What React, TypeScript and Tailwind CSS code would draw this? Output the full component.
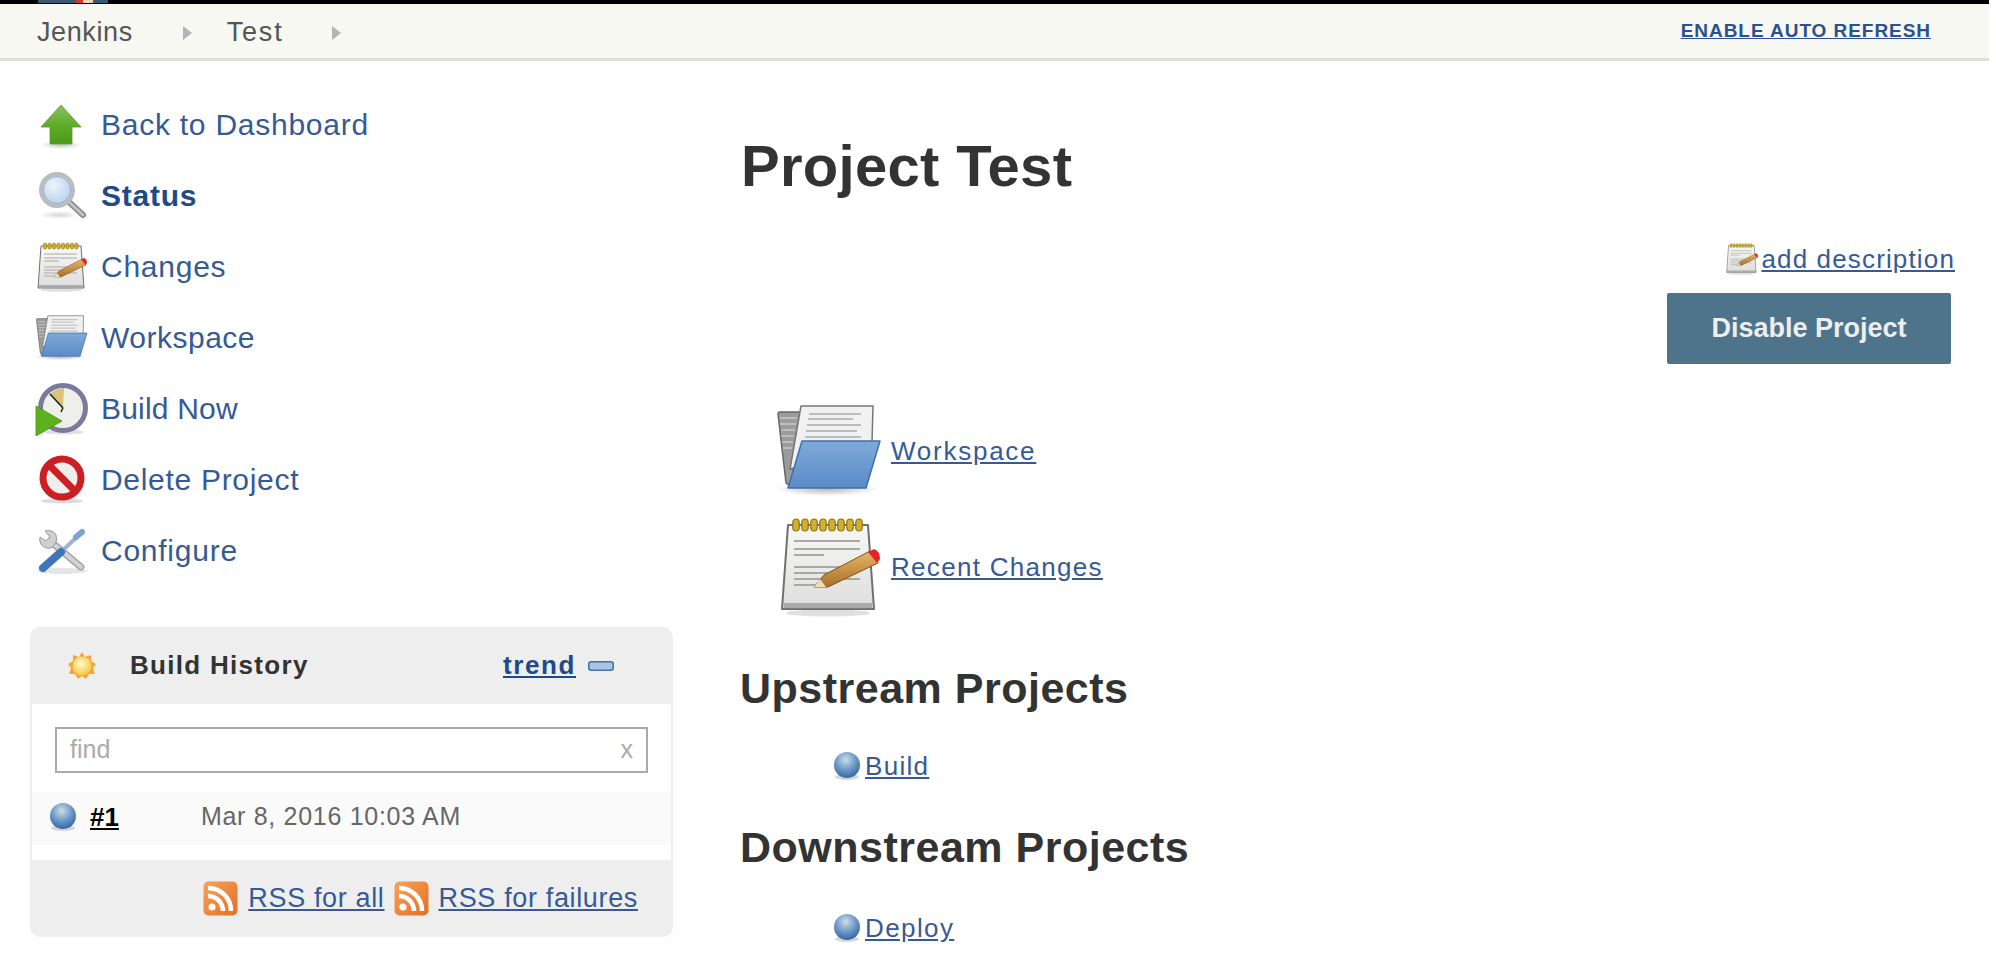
import React from "react";

function ArrowIcon() {
  return (
    <svg width="50" height="50" viewBox="0 0 50 50">
      <defs>
        <linearGradient id="arrowFill" x1="0" y1="0" x2="0" y2="1">
          <stop offset="0" stopColor="#8cc266" />
          <stop offset="0.55" stopColor="#5bab23" />
          <stop offset="1" stopColor="#4e9a18" />
        </linearGradient>
        <radialGradient id="arrowShadow">
          <stop offset="0" stopColor="#888" stopOpacity="0.5" />
          <stop offset="1" stopColor="#888" stopOpacity="0" />
        </radialGradient>
      </defs>
      <ellipse cx="24" cy="45" rx="21" ry="4" fill="url(#arrowShadow)" />
      <path d="M24 5 L44 27 L35 27 L35 44 L13 44 L13 27 L4 27 Z" fill="url(#arrowFill)" stroke="#5c9a2e" strokeWidth="0.8" />
    </svg>
  );
}

function SearchIcon() {
  return (
    <svg width="50" height="50" viewBox="0 0 50 50">
      <defs>
        <radialGradient id="lens" cx="0.4" cy="0.35" r="0.7">
          <stop offset="0" stopColor="#edf3fb" />
          <stop offset="1" stopColor="#b5cde8" />
        </radialGradient>
        <radialGradient id="searchShadow">
          <stop offset="0" stopColor="#999" stopOpacity="0.4" />
          <stop offset="1" stopColor="#999" stopOpacity="0" />
        </radialGradient>
      </defs>
      <ellipse cx="22" cy="44" rx="21" ry="4" fill="url(#searchShadow)" />
      <path d="M31 30 L46 44" stroke="#8a8a8a" strokeWidth="6" strokeLinecap="round" />
      <path d="M31 30 L46 44" stroke="#c4c4c4" strokeWidth="3" strokeLinecap="round" />
      <circle cx="20" cy="19" r="16" fill="url(#lens)" stroke="#bcbcbc" strokeWidth="4" />
      <circle cx="20" cy="19" r="13.5" fill="none" stroke="#8fb1d8" strokeWidth="1" />
    </svg>
  );
}

const ringXs = [8, 12.5, 17, 21.5, 26, 30.5, 35, 39.5];

function NotepadIcon({ size, id }: { size: number; id: string }) {
  return (
    <svg width={size} height={size} viewBox="0 0 50 50">
      <defs>
        <linearGradient id={id} x1="0" y1="0" x2="0" y2="1">
          <stop offset="0" stopColor="#f8f8f6" />
          <stop offset="1" stopColor="#dddddd" />
        </linearGradient>
        <linearGradient id={`${id}Pencil`} x1="0" y1="0" x2="0" y2="1">
          <stop offset="0" stopColor="#e8b766" />
          <stop offset="1" stopColor="#a8702a" />
        </linearGradient>
      </defs>
      <ellipse cx="24" cy="48" rx="21" ry="1.8" fill="#ccc" opacity="0.6" />
      <path d="M4 4 L44 4 L47 46 L1 46 Z" fill={`url(#${id})`} stroke="#6f6f6f" strokeWidth="1" strokeLinejoin="round" />
      <rect x="2" y="43" width="44" height="2.6" fill="#aaaaaa" />
      {ringXs.map((x) => (
        <rect key={x} x={x - 1.6} y="1" width="3.2" height="6" rx="1.6" fill="#d0b02e" stroke="#8f7415" strokeWidth="0.6" />
      ))}
      <path d="M7 12H40M7 16H40M7 19H22M7 25H38M7 28H30M7 31H40M7 34H18" stroke="#a8a8a8" strokeWidth="1" />
      <path d="M17 35 L22 29 L45 17 L49 23 L24 35 Z" fill={`url(#${id}Pencil)`} stroke="#7c5520" strokeWidth="0.5" strokeLinejoin="round" />
      <path d="M17 35 L20 31 L23 35 Z" fill="#f1dcb0" />
      <path d="M44 17.5 L47 16 Q50 17 50 21 L48.5 23 Z" fill="#e2252b" />
    </svg>
  );
}

function FolderIcon({ width, height, id }: { width: number; height: number; id: string }) {
  return (
    <svg width={width} height={height} viewBox="0 0 105 92">
      <defs>
        <linearGradient id={id} x1="0" y1="0" x2="0" y2="1">
          <stop offset="0" stopColor="#7fa9da" />
          <stop offset="1" stopColor="#5a8cc6" />
        </linearGradient>
        <radialGradient id={`${id}Shadow`}>
          <stop offset="0" stopColor="#888" stopOpacity="0.6" />
          <stop offset="1" stopColor="#888" stopOpacity="0" />
        </radialGradient>
      </defs>
      <ellipse cx="50" cy="84" rx="52" ry="7" fill={`url(#${id}Shadow)`} />
      <path d="M1 9 Q1 7 3 7 L24 7 L14 82 L9 78 Z" fill="#9c9c9c" stroke="#666" strokeWidth="1.5" strokeLinejoin="round" />
      <path d="M3 13H20M3 19H19M4 25H18M4 31H17M5 37H16M6 43H15" stroke="#c8c8c8" strokeWidth="1.5" />
      <path d="M24 1 L96 1 L95 38 L30 60 L13 64 Z" fill="#f1f1f1" stroke="#777" strokeWidth="1.5" strokeLinejoin="round" />
      <path d="M32 9H84M31 14H76M30 20H84M29 26H80M28 32H84" stroke="#aaa" strokeWidth="1.6" />
      <path d="M25 36 L103 36 L89 83 L11 83 Z" fill={`url(#${id})`} stroke="#3f70ab" strokeWidth="1.5" strokeLinejoin="round" />
    </svg>
  );
}

function ClockIcon() {
  return (
    <svg width="54" height="54" viewBox="0 0 54 54">
      <ellipse cx="29" cy="50" rx="20" ry="2.5" fill="#ccc" opacity="0.6" />
      <circle cx="28" cy="26" r="22.5" fill="#efefe9" stroke="#7a7a9c" strokeWidth="5" />
      <path d="M28 26 L15 12 A21 21 0 0 1 29 6 Z" fill="#d8c47a" />
      <path d="M28 26 L15 12 M28 26 L26 30" stroke="#222" strokeWidth="1.6" />
      <path d="M1 24 L27 39 L1 54 Z" fill="#5cb21d" stroke="#4b8f1a" strokeWidth="0.8" strokeLinejoin="round" />
    </svg>
  );
}

function StopIcon() {
  return (
    <svg width="50" height="50" viewBox="0 0 50 50">
      <ellipse cx="25" cy="46" rx="21" ry="2.5" fill="#ccc" opacity="0.7" />
      <circle cx="25" cy="23" r="19" fill="#eeeeee" stroke="#cc1f24" strokeWidth="7" />
      <path d="M12 10 L38 36" stroke="#cc1f24" strokeWidth="7" />
    </svg>
  );
}

function ToolsIcon() {
  return (
    <svg width="54" height="50" viewBox="0 0 54 50">
      <ellipse cx="27" cy="45" rx="25" ry="3" fill="#ccc" opacity="0.5" />
      <path d="M15 15 L46 41" stroke="#a6a6a6" strokeWidth="7" strokeLinecap="round" />
      <path d="M15 15 L46 41" stroke="#d4d4d4" strokeWidth="4" strokeLinecap="round" />
      <path d="M5 11 L11 15 L15 11 L10 5 Q18 3 21 9 Q23 14 20 18 L16 22 Q9 23 6 18 Q4 15 5 11 Z" fill="#cfcfcf" stroke="#9a9a9a" strokeWidth="1" strokeLinejoin="round" />
      <path d="M26 26 L44 9" stroke="#9fb4cc" strokeWidth="4" strokeLinecap="round" />
      <path d="M41 11 L47 6" stroke="#7fa3cf" strokeWidth="6" strokeLinecap="round" />
      <path d="M8 42 L26 26" stroke="#3f76b8" strokeWidth="8" strokeLinecap="round" />
    </svg>
  );
}

function SunIcon() {
  return (
    <svg width="30" height="30" viewBox="0 0 30 30">
      <defs>
        <radialGradient id="sunFill" cx="0.45" cy="0.4" r="0.6">
          <stop offset="0" stopColor="#fffbd0" />
          <stop offset="1" stopColor="#f8c73c" />
        </radialGradient>
      </defs>
      <path d="M15 1 L18 6 L24 4 L24 10 L29 13 L26 17 L28 23 L22 23 L19 28 L15 25 L11 28 L8 23 L2 23 L4 17 L1 13 L6 10 L6 4 L12 6 Z" fill="#f4a63a" />
      <circle cx="15" cy="15" r="9.5" fill="url(#sunFill)" />
    </svg>
  );
}

function BallIcon({ id }: { id: string }) {
  return (
    <svg width="28" height="28" viewBox="0 0 28 28">
      <defs>
        <radialGradient id={id} cx="0.45" cy="0.3" r="0.75">
          <stop offset="0" stopColor="#cfdde8" />
          <stop offset="0.5" stopColor="#6f9bc9" />
          <stop offset="1" stopColor="#2f609f" />
        </radialGradient>
      </defs>
      <ellipse cx="14" cy="25" rx="12" ry="3" fill="#bbb" opacity="0.6" />
      <circle cx="14" cy="13" r="13" fill={`url(#${id})`} />
    </svg>
  );
}

function RssIcon({ id }: { id: string }) {
  return (
    <svg width="35" height="35" viewBox="0 0 35 35">
      <defs>
        <linearGradient id={id} x1="0" y1="0" x2="1" y2="1">
          <stop offset="0" stopColor="#f6a25c" />
          <stop offset="1" stopColor="#e46f22" />
        </linearGradient>
      </defs>
      <rect x="0.5" y="0.5" width="34" height="34" rx="5" fill={`url(#${id})`} />
      <circle cx="9" cy="26" r="3.6" fill="#fff" />
      <path d="M5 15 A15 15 0 0 1 20 30 M5 7 A23 23 0 0 1 28 30" fill="none" stroke="#fff" strokeWidth="4.6" />
    </svg>
  );
}

function MinusIcon() {
  return (
    <svg width="26" height="10" viewBox="0 0 26 10">
      <rect x="0.75" y="0.75" width="24.5" height="8.5" rx="2.5" fill="#a9c3e2" stroke="#4173ad" strokeWidth="1.5" />
    </svg>
  );
}

function Chevron() {
  return <div className="w-0 h-0 border-y-[7px] border-y-transparent border-l-[9px] border-l-[#b4b4b4]" />;
}

const sidebarItems = [
  { label: "Back to Dashboard", icon: <ArrowIcon />, tracking: "tracking-[0.75px]" },
  { label: "Status", icon: <SearchIcon />, bold: true, tracking: "tracking-[0.75px]" },
  { label: "Changes", icon: <NotepadIcon size={50} id="noteSide" />, tracking: "tracking-[0.75px]" },
  { label: "Workspace", icon: <FolderIcon width={52} height={46} id="folderSide" />, tracking: "tracking-[0.5px]" },
  { label: "Build Now", icon: <ClockIcon />, tracking: "tracking-[0.2px]" },
  { label: "Delete Project", icon: <StopIcon />, tracking: "tracking-[0.7px]" },
  { label: "Configure", icon: <ToolsIcon />, tracking: "tracking-[0.75px]" },
];

export default function App() {
  return (
    <div className="w-[1996px] h-[974px] overflow-hidden bg-white font-['Liberation_Sans',Arial,sans-serif]">
      <div className="w-[1989px]">
        <div className="h-[4px] bg-black pl-[38px] overflow-hidden">
          <svg width="70" height="3" viewBox="0 0 70 3" className="block">
            <rect width="70" height="3" fill="#3b5a70" />
            <rect x="38" width="7" height="3" fill="#d33833" />
            <rect x="45" width="10" height="3" fill="#f0d6b7" />
          </svg>
        </div>

        <div className="h-[57px] bg-[#f6f8f1] border-b-[3px] border-[#dcdfd6] flex items-center pl-[37px] pr-[58px] pt-[3px]">
          <span className="text-[27px] tracking-[0.6px] text-[#555]">Jenkins</span>
          <div className="ml-[50px]"><Chevron /></div>
          <span className="ml-[35px] text-[27px] tracking-[1.8px] text-[#555]">Test</span>
          <div className="ml-[49px]"><Chevron /></div>
          <a className="ml-auto mb-[2px] text-[19px] font-bold tracking-[0.95px] text-[#2a5190] underline">ENABLE AUTO REFRESH</a>
        </div>
      </div>

      <div className="flex">
        <div className="w-[741px] shrink-0 pl-[30px] pt-[28px]">
          {sidebarItems.map((item) => (
            <div key={item.label} className="h-[71px] flex items-center">
              <div className="w-[56px] ml-[4px] flex justify-center">{item.icon}</div>
              <span className={`ml-[11px] text-[30px] ${item.tracking} ${item.bold ? "font-bold text-[#204a87]" : "text-[#355a96]"}`}>
                {item.label}
              </span>
            </div>
          ))}

          <div className="mt-[41px] w-[643px] h-[310px] rounded-[10px] bg-[#eeeeee] overflow-hidden flex flex-col">
            <div className="h-[77px] flex items-center pl-[37px] pr-[59px]">
              <SunIcon />
              <span className="ml-[33px] text-[26px] font-bold tracking-[1.3px] text-[#333]">Build History</span>
              <a className="ml-auto text-[26px] font-bold tracking-[1.6px] text-[#204a87] underline">trend</a>
              <div className="ml-[12px]"><MinusIcon /></div>
            </div>

            <div className="mx-[2px] h-[156px] bg-white pt-[23px]">
              <div className="mx-[23px] h-[46px] border-2 border-[#aaaaaa] flex items-center justify-between px-[13px] text-[25px] text-[#aaaaaa]">
                <span>find</span>
                <span>x</span>
              </div>
              <div className="mt-[19px] h-[53px] bg-[#fafafa] flex items-center pl-[17px] pb-[3px]">
                <BallIcon id="ballHistory" />
                <a className="ml-[13px] text-[26px] font-bold text-black underline">#1</a>
                <span className="ml-[82px] text-[25px] tracking-[0.7px] text-[#666]">Mar 8, 2016 10:03 AM</span>
              </div>
            </div>

            <div className="flex-1 flex items-center justify-end pr-[35px] text-[27px] tracking-[0.65px] text-[#355a96]">
              <RssIcon id="rssAll" />
              <a className="ml-[10px] underline">RSS for all</a>
              <div className="ml-[9px]"><RssIcon id="rssFailures" /></div>
              <a className="ml-[10px] underline">RSS for failures</a>
            </div>
          </div>
        </div>

        <div className="w-[1214px] shrink-0">
          <h1 className="mt-[69px] text-[58px] leading-[72px] tracking-[0.3px] font-bold text-[#333]">Project Test</h1>

          <div className="mt-[39px] flex flex-col items-end">
            <div className="flex items-center h-[36px]">
              <NotepadIcon size={32} id="noteDesc" />
              <a className="ml-[3px] text-[26px] tracking-[1.15px] text-[#355a96] underline">add description</a>
            </div>
            <button className="mt-[16px] mr-[4px] w-[284px] h-[71px] rounded-[2px] bg-[#4d748a] text-[27px] font-bold text-[#eeeeee]">
              Disable Project
            </button>
          </div>

          <div className="mt-[39px] pl-[36px] flex items-center h-[96px]">
            <FolderIcon width={105} height={92} id="folderMain" />
            <a className="ml-[9px] text-[26px] tracking-[1.75px] text-[#355a96] underline">Workspace</a>
          </div>
          <div className="mt-[18px] pl-[36px] flex items-center h-[100px]">
            <div className="w-[105px] flex justify-center"><NotepadIcon size={100} id="noteMain" /></div>
            <a className="ml-[9px] text-[26px] tracking-[1.3px] text-[#355a96] underline">Recent Changes</a>
          </div>

          <h2 className="mt-[44px] -ml-[1px] text-[43px] leading-[54px] tracking-[0.5px] font-bold text-[#333]">Upstream Projects</h2>
          <div className="mt-[37px] pl-[92px] flex items-center h-[28px]">
            <BallIcon id="ballBuild" />
            <a className="ml-[4px] text-[26px] tracking-[1.3px] text-[#355a96] underline">Build</a>
          </div>
          <h2 className="mt-[40px] -ml-[1px] text-[43px] leading-[54px] tracking-[0.5px] font-bold text-[#333]">Downstream Projects</h2>
          <div className="mt-[40px] pl-[92px] flex items-center h-[28px]">
            <BallIcon id="ballDeploy" />
            <a className="ml-[4px] text-[26px] tracking-[1.4px] text-[#355a96] underline">Deploy</a>
          </div>
        </div>
      </div>
    </div>
  );
}
